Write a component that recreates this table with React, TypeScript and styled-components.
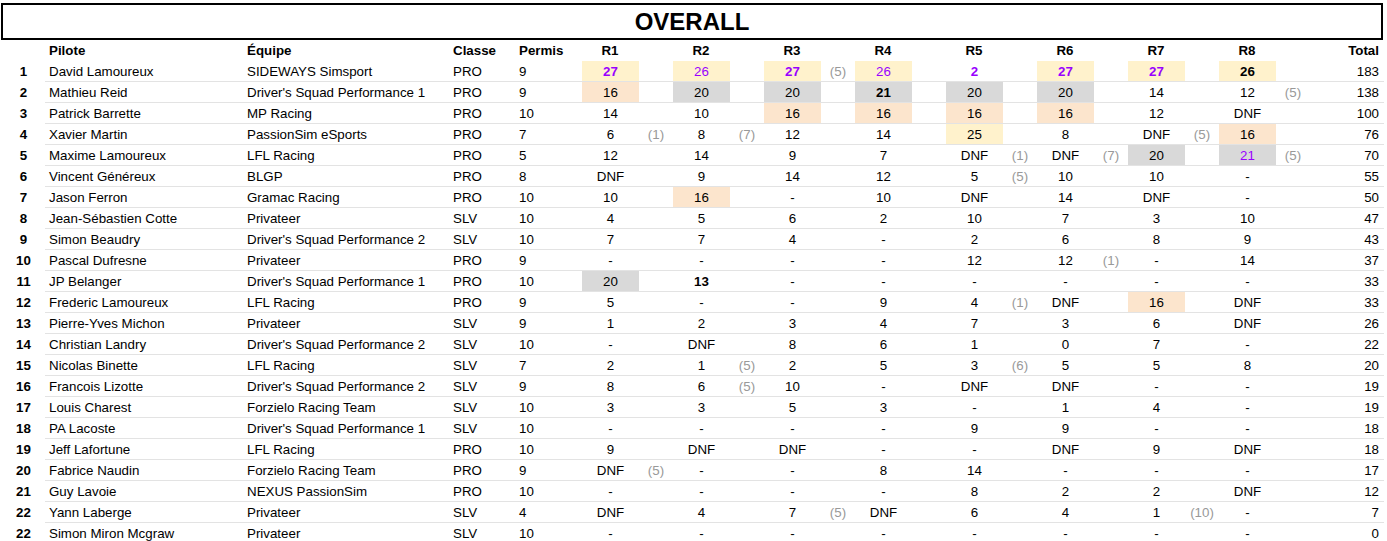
import styled, { createGlobalStyle } from 'styled-components';

type Bg = 'y' | 'o' | 'g' | '';

const GlobalStyle = createGlobalStyle`
  body {
    margin: 0;
    background: #ffffff;
    font-family: 'Liberation Sans', Arial, sans-serif;
    color: #000000;
  }
`;

const COLUMNS = '45px 198px 206px 66px 67px repeat(8, 57px 34px) 74px';

const BG: Record<Bg, string> = {
  y: '#fff2cc',
  o: '#fce5cd',
  g: '#d9d9d9',
  '': 'transparent',
};

// each race: "value|bg|fx|penalty" (fx: p = purple, b = bold)
const rows: [string, string, string, string, string, string[], string][] = [
  ['1', 'David Lamoureux', 'SIDEWAYS Simsport', 'PRO', '9', ['27|y|pb', '26|y|p', '27|y|pb|5', '26|y|p', '2||pb', '27|y|pb', '27|y|pb', '26|y|b'], '183'],
  ['2', 'Mathieu Reid', "Driver's Squad Performance 1", 'PRO', '9', ['16|o', '20|g', '20|g', '21|g|b', '20|g', '20|g', '14', '12|||5'], '138'],
  ['3', 'Patrick Barrette', 'MP Racing', 'PRO', '10', ['14', '10', '16|o', '16|o', '16|o', '16|o', '12', 'DNF'], '100'],
  ['4', 'Xavier Martin', 'PassionSim eSports', 'PRO', '7', ['6|||1', '8|||7', '12', '14', '25|y', '8', 'DNF|||5', '16|o'], '76'],
  ['5', 'Maxime Lamoureux', 'LFL Racing', 'PRO', '5', ['12', '14', '9', '7', 'DNF|||1', 'DNF|||7', '20|g', '21|g|p|5'], '70'],
  ['6', 'Vincent Généreux', 'BLGP', 'PRO', '8', ['DNF', '9', '14', '12', '5|||5', '10', '10', '-'], '55'],
  ['7', 'Jason Ferron', 'Gramac Racing', 'PRO', '10', ['10', '16|o', '-', '10', 'DNF', '14', 'DNF', '-'], '50'],
  ['8', 'Jean-Sébastien Cotte', 'Privateer', 'SLV', '10', ['4', '5', '6', '2', '10', '7', '3', '10'], '47'],
  ['9', 'Simon Beaudry', "Driver's Squad Performance 2", 'SLV', '10', ['7', '7', '4', '-', '2', '6', '8', '9'], '43'],
  ['10', 'Pascal Dufresne', 'Privateer', 'PRO', '9', ['-', '-', '-', '-', '12', '12|||1', '-', '14'], '37'],
  ['11', 'JP Belanger', "Driver's Squad Performance 1", 'PRO', '10', ['20|g', '13||b', '-', '-', '-', '-', '-', '-'], '33'],
  ['12', 'Frederic Lamoureux', 'LFL Racing', 'PRO', '9', ['5', '-', '-', '9', '4|||1', 'DNF', '16|o', 'DNF'], '33'],
  ['13', 'Pierre-Yves Michon', 'Privateer', 'SLV', '9', ['1', '2', '3', '4', '7', '3', '6', 'DNF'], '26'],
  ['14', 'Christian Landry', "Driver's Squad Performance 2", 'SLV', '10', ['-', 'DNF', '8', '6', '1', '0', '7', '-'], '22'],
  ['15', 'Nicolas Binette', 'LFL Racing', 'SLV', '7', ['2', '1|||5', '2', '5', '3|||6', '5', '5', '8'], '20'],
  ['16', 'Francois Lizotte', "Driver's Squad Performance 2", 'SLV', '9', ['8', '6|||5', '10', '-', 'DNF', 'DNF', '-', '-'], '19'],
  ['17', 'Louis Charest', 'Forzielo Racing Team', 'SLV', '10', ['3', '3', '5', '3', '-', '1', '4', '-'], '19'],
  ['18', 'PA Lacoste', "Driver's Squad Performance 1", 'SLV', '10', ['-', '-', '-', '-', '9', '9', '-', '-'], '18'],
  ['19', 'Jeff Lafortune', 'LFL Racing', 'PRO', '10', ['9', 'DNF', 'DNF', '-', '-', 'DNF', '9', 'DNF'], '18'],
  ['20', 'Fabrice Naudin', 'Forzielo Racing Team', 'PRO', '9', ['DNF|||5', '-', '-', '8', '14', '-', '-', '-'], '17'],
  ['21', 'Guy Lavoie', 'NEXUS PassionSim', 'PRO', '10', ['-', '-', '-', '-', '8', '2', '2', 'DNF'], '12'],
  ['22', 'Yann Laberge', 'Privateer', 'SLV', '4', ['DNF', '4', '7|||5', 'DNF', '6', '4', '1|||10', '-'], '7'],
  ['22', 'Simon Miron Mcgraw', 'Privateer', 'SLV', '10', ['-', '-', '-', '-', '-', '-', '-', '-'], '0'],
];

const App = () => {
  return (
    <>
      <GlobalStyle />
      <Sheet>
        <TitleBox>OVERALL</TitleBox>
        <HeaderRow>
          <HeadCell />
          <HeadCell>Pilote</HeadCell>
          <HeadCell>Équipe</HeadCell>
          <HeadCell>Classe</HeadCell>
          <HeadCell>Permis</HeadCell>
          {Array.from({ length: 8 }, (_, i) => [
            <HeadCell key={`r${i}`} $align="center">
              R{i + 1}
            </HeadCell>,
            <HeadCell key={`p${i}`} />,
          ])}
          <HeadCell $align="right">Total</HeadCell>
        </HeaderRow>
        {rows.map(([rank, pilot, team, classe, permis, races, total], idx) => (
          <Row key={idx}>
            <RankCell>{rank}</RankCell>
            <Cell>{pilot}</Cell>
            <Cell>{team}</Cell>
            <Cell>{classe}</Cell>
            <Cell>{permis}</Cell>
            {races.map((race, i) => {
              const [value, bg = '', fx = '', pen] = race.split('|');
              return [
                <RaceCell
                  key={`r${i}`}
                  $bg={bg as Bg}
                  $purple={fx.includes('p')}
                  $bold={fx.includes('b')}
                >
                  {value}
                </RaceCell>,
                <PenaltyCell key={`p${i}`}>{pen ? `(${pen})` : ''}</PenaltyCell>,
              ];
            })}
            <Cell $align="right">{total}</Cell>
          </Row>
        ))}
      </Sheet>
    </>
  );
};

export default App;

const Sheet = styled.div`
  width: 1387px;
  padding-top: 3px;
  font-size: 13.33px;
`;

const TitleBox = styled.div`
  margin-left: 1px;
  width: 1382px;
  height: 37px;
  box-sizing: border-box;
  border: 2px solid #000000;
  display: flex;
  align-items: center;
  justify-content: center;
  font-size: 24px;
  font-weight: 700;
`;

const HeaderRow = styled.div`
  display: grid;
  grid-template-columns: ${COLUMNS};
  height: 21px;
`;

const HeadCell = styled.div<{ $align?: string }>`
  font-weight: 700;
  line-height: 21px;
  padding: 0 5px 0 4px;
  text-align: ${(p) => p.$align || 'left'};
  white-space: nowrap;
`;

const Row = styled.div`
  display: grid;
  grid-template-columns: ${COLUMNS};
  height: 21px;
`;

const Cell = styled.div<{ $align?: string }>`
  box-sizing: border-box;
  height: 21px;
  line-height: 21px;
  border-bottom: 1px solid #e3e3e3;
  padding: 0 5px 0 4px;
  text-align: ${(p) => p.$align || 'left'};
  white-space: nowrap;
  overflow: hidden;
`;

const RankCell = styled.div`
  line-height: 21px;
  font-weight: 700;
  text-align: center;
  padding-left: 2px;
`;

const RaceCell = styled.div<{ $bg: Bg; $purple: boolean; $bold: boolean }>`
  box-sizing: border-box;
  height: 21px;
  line-height: 21px;
  overflow: hidden;
  border-bottom: 1px solid #e3e3e3;
  text-align: center;
  background: ${(p) => BG[p.$bg]};
  color: ${(p) => (p.$purple ? '#9900ff' : '#000000')};
  font-weight: ${(p) => (p.$bold ? 700 : 400)};
`;

const PenaltyCell = styled.div`
  box-sizing: border-box;
  height: 21px;
  line-height: 21px;
  overflow: hidden;
  border-bottom: 1px solid #e3e3e3;
  text-align: center;
  color: #999999;
`;
